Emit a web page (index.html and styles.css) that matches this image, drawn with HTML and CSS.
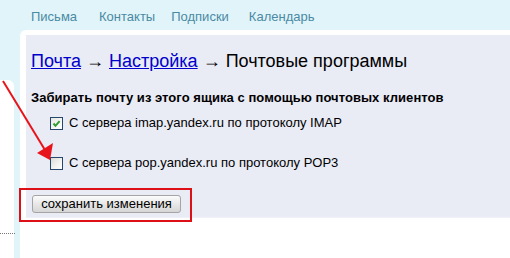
FILE: index.html
```html
<!DOCTYPE html>
<html lang="ru">
<head>
<meta charset="utf-8">
<title>Почтовые программы</title>
<link rel="stylesheet" href="styles.css">
</head>
<body>
<nav class="nav">
  <a class="nav-item nav-letters" href="#">Письма</a>
  <a class="nav-item nav-contacts" href="#">Контакты</a>
  <a class="nav-item nav-subs" href="#">Подписки</a>
  <a class="nav-item" href="#">Календарь</a>
</nav>
<div class="layout">
  <aside class="side"><div class="side-dots"></div></aside>
  <main class="main">
    <section class="panel">
      <h1 class="title"><a href="#">Почта</a> → <a href="#">Настройка</a> → Почтовые программы</h1>
      <p class="lead">Забирать почту из этого ящика с помощью почтовых клиентов</p>
      <label class="opt opt-first">
        <span class="cb cb-on"><svg viewBox="0 0 11 11" width="11" height="11"><path d="M2.5 5.5 L4.5 7.8 L8.6 3.2" fill="none" stroke="#2f9e2f" stroke-width="2"/></svg></span>
        <span class="opt-text">С сервера imap.yandex.ru по протоколу IMAP</span>
      </label>
      <label class="opt opt-second">
        <span class="cb"></span>
        <span class="opt-text">С сервера pop.yandex.ru по протоколу POP3</span>
      </label>
      <button class="save" type="button">сохранить изменения</button>
    </section>
  </main>
</div>
<div class="hl-box"></div>
<svg class="hl-arrow" width="60" height="170" viewBox="0 0 60 170">
  <line x1="3" y1="81" x2="45" y2="150" stroke="#e8141c" stroke-width="2"/>
  <polygon points="37,153 53,143 50,160" fill="#e8141c"/>
</svg>
</body>
</html>
```
FILE: styles.css
```css
html, body {
  margin: 0;
  padding: 0;
}
body {
  width: 510px;
  height: 258px;
  overflow: hidden;
  background: #e1f4fa;
  font-family: "Liberation Sans", Arial, sans-serif;
  color: #000;
  position: relative;
}
.nav {
  height: 30px;
  box-sizing: border-box;
  padding: 9px 0 0 31px;
  display: flex;
  font-size: 13px;
  line-height: 16px;
}
.nav-item {
  color: #4a8aa3;
  text-decoration: none;
}
.nav-letters { margin-right: 22px; }
.nav-contacts { margin-right: 16px; }
.nav-subs { margin-right: 20px; }
.layout {
  display: flex;
  height: 228px;
}
.side {
  flex: none;
  width: 14px;
  margin-top: 50px;
  margin-right: 6px;
  background: #fff;
  border-top-right-radius: 6px;
}
.side-dots {
  margin-top: 153px;
  width: 15px;
  border-top: 1px dotted #777;
}
.main {
  flex: 1;
  background: #fff;
  border-top-left-radius: 6px;
  padding: 5px 0 0 6px;
}
.panel {
  background: #e9ebf5;
  height: 183px;
  box-sizing: border-box;
  padding: 15px 0 0 5px;
  border-bottom: 1px solid #f0f1f8;
}
.title {
  margin: 0;
  font-size: 18px;
  line-height: 22px;
  font-weight: normal;
  white-space: nowrap;
}
.title a {
  color: #0000cc;
}
.lead {
  margin: 18px 0 0;
  font-size: 13px;
  line-height: 16px;
  font-weight: bold;
  letter-spacing: 0.05px;
  white-space: nowrap;
}
.opt {
  display: flex;
  align-items: center;
  height: 16px;
  font-size: 13px;
  line-height: 16px;
  padding-left: 19px;
  white-space: nowrap;
}
.opt-first { margin-top: 9px; }
.opt-second { margin-top: 24px; }
.cb {
  flex: none;
  width: 11px;
  height: 11px;
  border: 1px solid #24476b;
  background: linear-gradient(135deg, #dcdcd6 0%, #f4f4f2 60%, #fff 100%);
  margin-right: 6px;
  display: flex;
}
.cb-on {
  background: linear-gradient(135deg, #e6e6e2 0%, #fafafa 70%, #fff 100%);
}
.save {
  display: block;
  margin: 24px 0 0 1px;
  width: 149px;
  height: 18px;
  padding: 0;
  font-family: "Liberation Sans", Arial, sans-serif;
  font-size: 13px;
  line-height: 16px;
  color: #000;
  border: 1px solid #a4a4a4;
  border-radius: 3px;
  background: linear-gradient(#fcfcfc, #e4e4e4 60%, #d6d6d6);
}
.hl-box {
  position: absolute;
  left: 19px;
  top: 188px;
  width: 169px;
  height: 30px;
  border: 2px solid #dd1018;
}
.hl-arrow {
  position: absolute;
  left: 0;
  top: 0;
}
```
